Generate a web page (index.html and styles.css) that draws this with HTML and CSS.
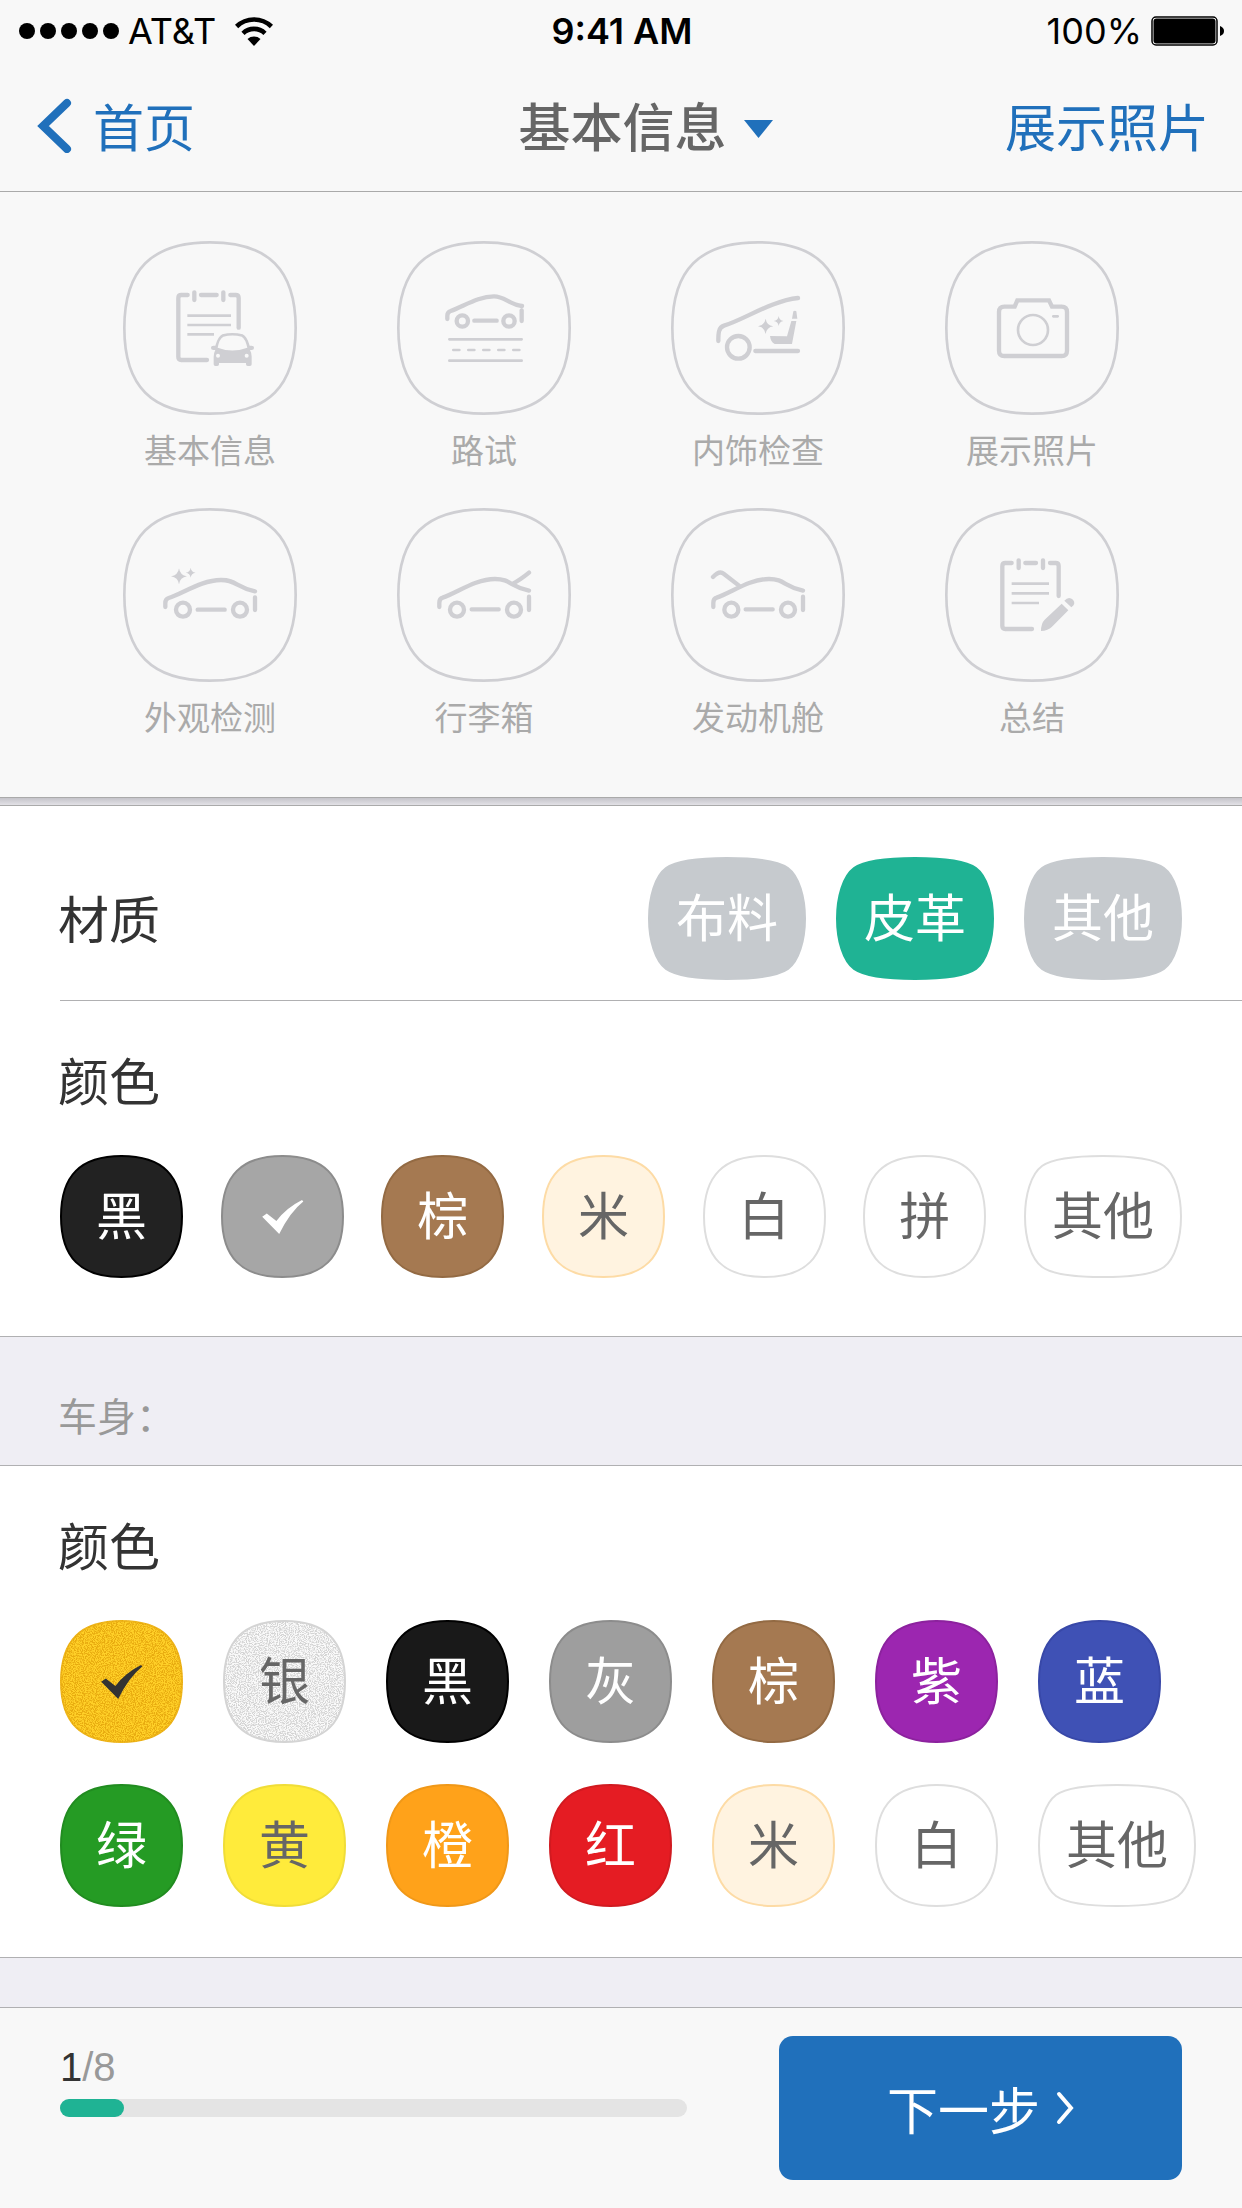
FILE: index.html
```html
<!DOCTYPE html>
<html lang="zh-CN">
<head>
<meta charset="utf-8">
<meta name="viewport" content="width=device-width, initial-scale=1">
<title>基本信息</title>
<link rel="stylesheet" href="styles.css">
</head>
<body>
<svg class="defs" aria-hidden="true">
  <defs>
    <symbol id="ring" viewBox="0 0 522 522">
      <path d="M261 4C436 4 518 86 518 261S436 518 261 518 4 436 4 261 86 4 261 4Z"/>
    </symbol>
    <symbol id="tile" viewBox="0 0 123 123">
      <path d="M61.500 1C102.500 1 122 20.500 122 61.500S102.500 122 61.500 122 1 102.500 1 61.500 20.500 1 61.500 1Z"/>
    </symbol>
    <symbol id="tile-wide" viewBox="0 0 158 123">
      <path d="M79 1C106 1 130 4 140 11C151 19 157 40 157 61.500S151 104 140 112C130 119 106 122 79 122S28 119 18 112C7 104 1 83 1 61.500S7 19 18 11C28 4 52 1 79 1Z"/>
    </symbol>
    <symbol id="tick" viewBox="0 0 123 123">
      <path d="M41.200 61.700 45.800 58.500 55.400 66Q65 53 81 45L82.300 46.500Q69 57 58.200 79Z"/>
    </symbol>
    <symbol id="star" viewBox="0 0 48 48">
      <path d="M24 0Q27 21 48 24 27 27 24 48 21 27 0 24 21 21 24 0Z"/>
    </symbol>
    <filter id="grain-gold" x="0" y="0" width="100%" height="100%" color-interpolation-filters="sRGB">
      <feTurbulence type="fractalNoise" baseFrequency="0.9" numOctaves="2" seed="3"/>
      <feColorMatrix values="0 0 0 0 0.91  0 0 0 0 0.67  0 0 0 0 0.06  5 0 0 0 -2.100"/>
      <feComposite in2="SourceGraphic" operator="atop"/>
    </filter>
    <filter id="grain-silver" x="0" y="0" width="100%" height="100%" color-interpolation-filters="sRGB">
      <feTurbulence type="fractalNoise" baseFrequency="0.9" numOctaves="2" seed="8"/>
      <feColorMatrix values="0 0 0 0 0.83  0 0 0 0 0.83  0 0 0 0 0.83  5 0 0 0 -2.100"/>
      <feComposite in2="SourceGraphic" operator="atop"/>
    </filter>
  </defs>
</svg>

<header class="top">
  <div class="status">
    <div class="status-side">
      <svg width="100" height="16" viewBox="0 0 100 16" aria-hidden="true"><circle cx="8" cy="8" r="8"/><circle cx="29" cy="8" r="8"/><circle cx="50" cy="8" r="8"/><circle cx="71" cy="8" r="8"/><circle cx="92" cy="8" r="8"/></svg>
      <span class="carrier">AT&amp;T</span>
      <svg width="38" height="32" viewBox="0 0 38 32" aria-hidden="true"><g fill="none" stroke="#000" stroke-width="4.600"><path d="M1.600 11.500a25 25 0 0 1 34.800 0"/><path d="M8 18.300a16 16 0 0 1 22 0"/></g><path d="M12.500 24a10 10 0 0 1 13 0L19 31Z"/></svg>
    </div>
    <strong class="clock">9:41 AM</strong>
    <div class="status-side status-end">
      <span>100%</span>
      <svg width="74" height="30" viewBox="0 0 74 30" aria-hidden="true"><rect x="1" y="1" width="65" height="28" rx="4" fill="none" stroke="#000" stroke-width="1.500"/><rect x="2.500" y="2.500" width="62" height="25" rx="3"/><path d="M69 10c3 1 4 3 4 5s-1 4-4 5Z"/></svg>
    </div>
  </div>
  <nav class="nav">
    <a class="back" href="#home">
      <svg width="36" height="56" viewBox="0 0 36 56" aria-hidden="true"><path d="M31 6 7 29l24 23" fill="none" stroke="currentColor" stroke-width="8" stroke-linecap="round"/></svg>
      首页
    </a>
    <button class="title" type="button">基本信息
      <svg width="29" height="18" viewBox="0 0 29 18" aria-hidden="true"><path d="M0 0h29L14.500 18Z"/></svg>
    </button>
    <a class="forward" href="#photos">展示照片</a>
  </nav>
</header>

<main>
  <nav class="menu">
    <a class="menu-item" href="#basic">
      <svg class="menu-icon" viewBox="39 33 522 522" aria-hidden="true">
        <use href="#ring" x="39" y="33" width="522" height="522"/>
        <g class="thick"><path d="M233 195H214Q205 195 205 204V381Q205 390 214 390H291M273 195H320M361 195H377Q386 195 386 204V293M253 187V210M340 187V210"/></g>
        <g class="thin"><path d="M232 257H363M232 285H363M232 313H312"/></g>
        <path class="solid" fill-rule="evenodd" d="M303 354q0-7 8-7h5q8-28 21-34 30-8 61 0 13 6 21 34h5q8 0 8 7 0 6-7 6h-5q5 9 5 20v23q0 5-5 5h-7q-5 0-5-5v-4H327v4q0 5-5 5h-6q-5 0-5-5v-23q0-11 5-20h-6q-7 0-7-6Zm20-1q44 17 89 0-6-27-17-33-28-7-55 0-12 6-17 33Zm1 18a6 6 0 1 0 0 12 6 6 0 1 0 0-12Zm86 0a6 6 0 1 0 0 12 6 6 0 1 0 0-12Z"/>
      </svg>
      基本信息
    </a>
    <a class="menu-item" href="#road">
      <svg class="menu-icon" viewBox="861 33 522 522" aria-hidden="true">
        <use href="#ring" x="861" y="33" width="522" height="522"/>
        <g class="thick"><path d="M1012 267V257Q1012 246 1022 243C1065 227 1105 199 1152 199C1185 199 1195 222 1236 228M1235 241V273M1093 272H1160"/><circle cx="1057" cy="273" r="17"/><circle cx="1197" cy="273" r="17"/></g>
        <g class="thin round"><path d="M1018 328H1235M1018 392H1235M1030 360H1048M1075 360H1093M1120 360H1138M1165 360H1183M1210 360H1228"/></g>
      </svg>
      路试
    </a>
    <a class="menu-item" href="#interior">
      <svg class="menu-icon" viewBox="63 33 522 522" aria-hidden="true">
        <use href="#ring" x="63" y="33" width="522" height="522"/>
        <g class="thick"><path d="M205 333C205 310 205 293 222 287C280 270 365 212 444 204M316 363H444"/><circle cx="265" cy="352" r="34"/></g>
        <g class="solid"><use href="#star" x="324" y="266" width="46" height="46"/><use href="#star" x="371" y="258" width="30" height="30"/><path d="M430 244q5-3 9 0l3 22h-16ZM424 273h15l-13 69h-52q-12-6-14-24l51 1Z"/></g>
      </svg>
      内饰检查
    </a>
    <a class="menu-item" href="#photos">
      <svg class="menu-icon" viewBox="885 33 522 522" aria-hidden="true">
        <use href="#ring" x="885" y="33" width="522" height="522"/>
        <g class="thick"><path d="M1063 230H1094L1102 211H1197L1206 230H1235Q1251 230 1251 246V362Q1251 378 1235 378H1063Q1047 378 1047 362V246Q1047 230 1063 230Z"/></g>
        <g class="thin"><circle cx="1149" cy="300" r="45"/><path class="round" d="M1210 259H1223"/></g>
      </svg>
      展示照片
    </a>
    <a class="menu-item" href="#exterior">
      <svg class="menu-icon" viewBox="39 24 522 522" aria-hidden="true">
        <use href="#ring" x="39" y="24" width="522" height="522"/>
        <g class="thick"><path d="M166 321V309Q166 297 176 294C220 280 275 240 333 240C380 240 378 263 435 274M435 292V330M263 329H344"/><circle cx="219" cy="329" r="21"/><circle cx="390" cy="329" r="21"/></g>
        <g class="solid"><use href="#star" x="183" y="205" width="48" height="48"/><use href="#star" x="227" y="203" width="30" height="30"/></g>
      </svg>
      外观检测
    </a>
    <a class="menu-item" href="#trunk">
      <svg class="menu-icon" viewBox="861 24 522 522" aria-hidden="true">
        <use href="#ring" x="861" y="24" width="522" height="522"/>
        <g class="thick"><path d="M988 321V308Q988 296 998 293C1042 278 1097 237 1155 237C1202 237 1200 260 1257 272M1257 290V330M1085 328H1166M1210 250Q1230 240 1257 218"/><circle cx="1041" cy="329" r="21"/><circle cx="1212" cy="329" r="21"/></g>
      </svg>
      行李箱
    </a>
    <a class="menu-item" href="#engine">
      <svg class="menu-icon" viewBox="63 24 522 522" aria-hidden="true">
        <use href="#ring" x="63" y="24" width="522" height="522"/>
        <g class="thick"><path d="M190 321V308Q190 296 200 293C244 278 299 237 357 237C404 237 402 260 459 272M459 290V330M287 328H368M189 231Q208 211 221 221L267 257"/><circle cx="244" cy="329" r="21"/><circle cx="414" cy="329" r="21"/></g>
      </svg>
      发动机舱
    </a>
    <a class="menu-item" href="#summary">
      <svg class="menu-icon" viewBox="885 24 522 522" aria-hidden="true">
        <use href="#ring" x="885" y="24" width="522" height="522"/>
        <g class="thick"><path d="M1085 189H1066Q1057 189 1057 198V378Q1057 387 1066 387H1146M1126 189H1158M1200 189H1217Q1226 189 1226 198V288M1106 181V204M1179 181V204"/></g>
        <g class="thin"><path d="M1085 251H1197M1085 280H1197M1085 309H1167"/></g>
        <path class="solid" d="M1173 393Q1173 370 1184 359L1235 311 1255 331 1206 380Q1194 392 1173 393ZM1243 302Q1256 287 1269 299 1279 311 1264 322Z"/>
      </svg>
      总结
    </a>
  </nav>
  <hr class="edge">

  <form id="details">
    <section class="group">
      <div class="row" role="radiogroup" aria-labelledby="material">
        <h2 class="label" id="material">材质</h2>
        <div class="segments">
          <label class="chip wide c-off"><input type="radio" name="material"><svg class="shape"><use href="#tile-wide"/></svg><span>布料</span></label>
          <label class="chip wide c-on"><input type="radio" name="material" checked><svg class="shape"><use href="#tile-wide"/></svg><span>皮革</span></label>
          <label class="chip wide c-off"><input type="radio" name="material"><svg class="shape"><use href="#tile-wide"/></svg><span>其他</span></label>
        </div>
      </div>
      <div class="colors" role="radiogroup" aria-labelledby="trim">
        <h2 class="label" id="trim">颜色</h2>
        <div class="spread">
          <label class="chip c-ink"><input type="radio" name="trim"><svg class="shape"><use href="#tile"/></svg><span>黑</span></label>
          <label class="chip c-ash"><input type="radio" name="trim" aria-label="灰" checked><svg class="shape"><use href="#tile"/></svg><svg class="mark"><use href="#tick"/></svg></label>
          <label class="chip c-brown"><input type="radio" name="trim"><svg class="shape"><use href="#tile"/></svg><span>棕</span></label>
          <label class="chip c-cream"><input type="radio" name="trim"><svg class="shape"><use href="#tile"/></svg><span>米</span></label>
          <label class="chip c-white"><input type="radio" name="trim"><svg class="shape"><use href="#tile"/></svg><span>白</span></label>
          <label class="chip c-white"><input type="radio" name="trim"><svg class="shape"><use href="#tile"/></svg><span>拼</span></label>
          <label class="chip wide c-white"><input type="radio" name="trim"><svg class="shape"><use href="#tile-wide"/></svg><span>其他</span></label>
        </div>
      </div>
    </section>

    <h3 class="caption">车身：</h3>

    <section class="group">
      <div class="colors paint" role="radiogroup" aria-labelledby="paint">
        <h2 class="label" id="paint">颜色</h2>
        <div class="swatches">
          <label class="chip c-gold"><input type="radio" name="paint" aria-label="金" checked><svg class="shape"><use href="#tile"/></svg><svg class="mark"><use href="#tick"/></svg></label>
          <label class="chip c-silver"><input type="radio" name="paint"><svg class="shape"><use href="#tile"/></svg><span>银</span></label>
          <label class="chip c-black"><input type="radio" name="paint"><svg class="shape"><use href="#tile"/></svg><span>黑</span></label>
          <label class="chip c-gray"><input type="radio" name="paint"><svg class="shape"><use href="#tile"/></svg><span>灰</span></label>
          <label class="chip c-brown"><input type="radio" name="paint"><svg class="shape"><use href="#tile"/></svg><span>棕</span></label>
          <label class="chip c-purple"><input type="radio" name="paint"><svg class="shape"><use href="#tile"/></svg><span>紫</span></label>
          <label class="chip c-blue"><input type="radio" name="paint"><svg class="shape"><use href="#tile"/></svg><span>蓝</span></label>
          <label class="chip c-green"><input type="radio" name="paint"><svg class="shape"><use href="#tile"/></svg><span>绿</span></label>
          <label class="chip c-yellow"><input type="radio" name="paint"><svg class="shape"><use href="#tile"/></svg><span>黄</span></label>
          <label class="chip c-orange"><input type="radio" name="paint"><svg class="shape"><use href="#tile"/></svg><span>橙</span></label>
          <label class="chip c-red"><input type="radio" name="paint"><svg class="shape"><use href="#tile"/></svg><span>红</span></label>
          <label class="chip c-cream"><input type="radio" name="paint"><svg class="shape"><use href="#tile"/></svg><span>米</span></label>
          <label class="chip c-white"><input type="radio" name="paint"><svg class="shape"><use href="#tile"/></svg><span>白</span></label>
          <label class="chip wide c-white"><input type="radio" name="paint"><svg class="shape"><use href="#tile-wide"/></svg><span>其他</span></label>
        </div>
      </div>
    </section>
  </form>
</main>

<footer class="footer">
  <div class="progress">
    <p class="step"><b>1</b>/8</p>
    <div class="track" role="progressbar" aria-label="进度" aria-valuemin="0" aria-valuemax="8" aria-valuenow="1"><div class="fill" style="width:10.2%"></div></div>
  </div>
  <button class="next" type="submit" form="details">下一步
    <svg width="18" height="34" viewBox="0 0 18 34" aria-hidden="true"><path d="M3 3 15 17 3 31" fill="none" stroke="currentColor" stroke-width="4" stroke-linecap="round"/></svg>
  </button>
</footer>
</body>
</html>
```
FILE: styles.css
```css
* {
  box-sizing: border-box;
}

body {
  display: flex;
  flex-direction: column;
  min-height: 100vh;
  margin: 0;
  background: #efeef4;
  color: #333;
  font-family: "Noto Sans CJK SC", sans-serif;
  font-size: 51px;
  font-weight: 400;
}

h2,
h3,
p {
  margin: 0;
  font-weight: inherit;
}

a {
  color: inherit;
  text-decoration: none;
}

button {
  border: 0;
  background: none;
  font: inherit;
}

.defs {
  position: absolute;
  width: 0;
  height: 0;
}

/* Header */

.top {
  background: #f8f8f8;
  border-bottom: 1px solid #aaa;
}

.status,
.nav {
  display: grid;
  grid-template-columns: 1fr auto 1fr;
  align-items: center;
}

.status {
  height: 62px;
  padding: 0 17px 0 19px;
  color: #000;
  font-family: Inter, sans-serif;
  font-size: 36px;
  line-height: 44px;
}

.status-side {
  display: flex;
  align-items: center;
  gap: 9px;
}

.status-end {
  justify-content: flex-end;
}

.carrier {
  margin-right: 10px;
}

.clock {
  font-weight: 600;
}

.nav {
  height: 129px;
  padding: 0 33px 4px 36px;
  color: #2070bb;
  line-height: 60px;
}

.back {
  display: flex;
  align-items: center;
  gap: 21px;
}

.title {
  display: flex;
  align-items: center;
  gap: 17px;
  padding: 0 0 0 46px;
  color: #666;
  font-size: 52px;
  font-weight: 500;
}

.title svg {
  margin-top: 8px;
  fill: #2070bb;
}

.forward {
  justify-self: end;
}

/* Step menu */

.menu {
  display: grid;
  grid-template-columns: repeat(4, 174px);
  justify-content: space-between;
  row-gap: 39px;
  padding: 49px 123px 61px;
  background: #f8f8f8;
}

.menu-item {
  display: flex;
  flex-direction: column;
  align-items: center;
  gap: 14px;
  color: #aaa;
  font-size: 33px;
  line-height: 40px;
  white-space: nowrap;
}

.menu-icon {
  width: 174px;
  height: 174px;
  fill: none;
  stroke: #cfcfd3;
  stroke-width: 8;
}

.thick {
  stroke-width: 13;
  stroke-linecap: round;
}

.thin {
  stroke-width: 8;
}

.round {
  stroke-linecap: round;
}

.solid {
  fill: #cfcfd3;
  stroke: none;
}

.edge {
  height: 9px;
  margin: 0;
  border: solid #aaa;
  border-width: 1px 0;
  background: linear-gradient(#c5c4ca, #e2e1e6);
}

/* Form */

.group {
  background: #fff;
  border-bottom: 1px solid #b0b0b2;
}

.row {
  display: flex;
  align-items: center;
  justify-content: space-between;
  margin-left: 60px;
  padding: 51px 60px 20px 0;
  border-bottom: 1px solid #b0b0b2;
}

.label {
  padding-bottom: 4px;
  font-size: 51px;
  line-height: 56px;
  text-indent: -2px;
}

.segments {
  display: flex;
  gap: 30px;
}

.colors {
  padding: 50px 60px 58px;
}

.paint {
  padding-right: 40px;
  padding-bottom: 50px;
}

.spread,
.swatches {
  display: flex;
  flex-wrap: wrap;
  margin-top: 44px;
}

.spread {
  justify-content: space-between;
}

.swatches {
  gap: 41px 40px;
}

.caption {
  padding: 51px 60px 25px;
  border-bottom: 1px solid #b0b0b2;
  color: #999;
  font-size: 39px;
  line-height: 52px;
  text-indent: -2px;
}

.chip {
  position: relative;
  display: flex;
  align-items: center;
  justify-content: center;
  width: 123px;
  height: 123px;
  padding-bottom: 8px;
  color: #fff;
  line-height: 60px;
  cursor: pointer;
}

.wide {
  width: 158px;
}

.chip input,
.shape,
.mark {
  position: absolute;
  inset: 0;
  width: 100%;
  height: 100%;
  margin: 0;
}

.chip input {
  opacity: 0;
}

.chip span {
  position: relative;
}

.shape {
  stroke-width: 2;
}

.mark {
  fill: currentColor;
}

.c-off .shape { fill: #c6cace; stroke: #c6cace; }
.c-on .shape { fill: #1fb394; stroke: #1fb394; }
.c-ink .shape { fill: #222; stroke: #000; }
.c-ash .shape { fill: #a6a6a6; stroke: #8c8c8c; }
.c-brown .shape { fill: #a57951; stroke: #936a43; }
.c-black .shape { fill: #191919; stroke: #000; }
.c-gray .shape { fill: #9e9e9e; stroke: #8c8c8c; }
.c-purple .shape { fill: #9c26b0; stroke: #8c229e; }
.c-blue .shape { fill: #3f51b5; stroke: #3848a8; }
.c-green .shape { fill: #259b24; stroke: #218c20; }
.c-orange .shape { fill: #ffa21a; stroke: #f09818; }
.c-red .shape { fill: #e51c23; stroke: #d11a20; }

.c-cream,
.c-white,
.c-yellow,
.c-silver {
  color: #666;
}

.c-cream .shape { fill: #fff3e0; stroke: #fddba5; }
.c-white .shape { fill: #fff; stroke: #dedede; }
.c-yellow .shape { fill: #ffeb3b; stroke: #f0dd38; }
.c-silver .shape { fill: #fafafa; stroke: #d4d4d4; filter: url(#grain-silver); }

.c-gold { color: #333; }
.c-gold .shape { fill: #ffd028; stroke: #f0b81c; filter: url(#grain-gold); }

/* Footer */

.footer {
  display: flex;
  align-items: flex-start;
  gap: 92px;
  margin-top: auto;
  padding: 28px 60px;
  background: #f8f8f8;
  border-top: 1px solid #b0b0b2;
}

.progress {
  flex: 1;
}

.step {
  padding: 10px 0;
  color: #999;
  font-family: "Liberation Sans", sans-serif;
  font-size: 40px;
  line-height: 43px;
}

.step b {
  color: #333;
  font-weight: 400;
}

.track {
  height: 18px;
  border-radius: 9px;
  background: #e4e4e4;
}

.fill {
  height: 100%;
  border-radius: 9px;
  background: #1fb394;
}

.next {
  display: flex;
  align-items: center;
  justify-content: center;
  gap: 16px;
  width: 403px;
  height: 144px;
  padding: 0;
  border-radius: 14px;
  background: #2070bb;
  color: #fff;
  line-height: 60px;
}
```
